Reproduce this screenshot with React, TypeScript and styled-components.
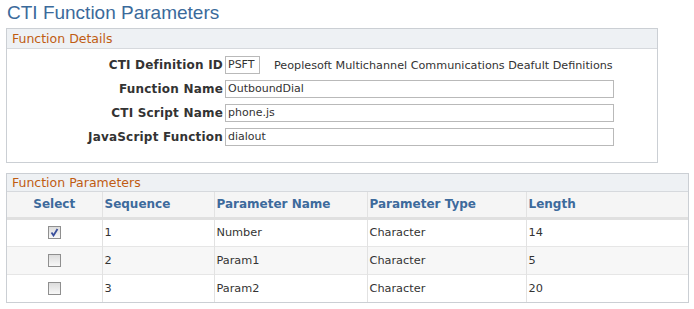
import styled, { createGlobalStyle } from 'styled-components';

const GlobalStyle = createGlobalStyle`
  body {
    margin: 0;
    background: #ffffff;
    font-family: "DejaVu Sans", Verdana, sans-serif;
    font-size: 11px;
    color: #333333;
  }
`;

const Page = styled.div`
  padding: 0 6px;
  width: 683px;
`;

const Title = styled.h1`
  margin: 0;
  padding: 2px 0 0 1px;
  height: 26px;
  font-family: "Liberation Sans", Arial, sans-serif;
  font-weight: normal;
  font-size: 19px;
  line-height: 22px;
  color: #3b6a9b;
`;

const Section = styled.div<{ $width: number }>`
  width: ${(p) => p.$width}px;
  border: 1px solid #cbcfd4;
  box-sizing: border-box;
`;

const SectionHeader = styled.div<{ $height: number }>`
  height: ${(p) => p.$height}px;
  line-height: ${(p) => p.$height}px;
  padding-left: 5px;
  background: #eef1f4;
  border-bottom: 1px solid #d6d9dd;
  color: #c05c12;
  font-size: 12.5px;
`;

const Form = styled.div`
  display: grid;
  grid-template-columns: 216px auto;
  column-gap: 2px;
  row-gap: 6px;
  padding: 7px 0 16px;
  align-items: center;
`;

const Label = styled.label`
  text-align: right;
  font-weight: bold;
  font-size: 12px;
  letter-spacing: 0.2px;
  color: #333333;
  white-space: nowrap;
`;

const Field = styled.div`
  display: flex;
  align-items: center;
  gap: 14px;
`;

const Input = styled.div<{ $width: number }>`
  width: ${(p) => p.$width}px;
  height: 18px;
  box-sizing: border-box;
  border: 1px solid #b9b9b9;
  padding-left: 2px;
  line-height: 16px;
  color: #333333;
`;

const Description = styled.span`
  color: #333333;
  font-size: 11.2px;
`;

const Gap = styled.div`
  height: 10px;
`;

const Table = styled.table`
  width: 100%;
  border-collapse: collapse;
  table-layout: fixed;
`;

const Th = styled.th<{ $w: number; $center?: boolean }>`
  box-sizing: border-box;
  width: ${(p) => p.$w}px;
  height: 26px;
  padding: 0 2px;
  text-align: ${(p) => (p.$center ? 'center' : 'left')};
  background: #f5f5f5;
  color: #3d6a9c;
  font-weight: bold;
  font-size: 12px;
  border-right: 1px solid #e2e2e2;
  border-bottom: 3px solid #e0e0e0;
  &:last-child {
    border-right: none;
  }
`;

const Tr = styled.tr<{ $alt: boolean }>`
  background: ${(p) => (p.$alt ? '#f7f7f7' : '#ffffff')};
`;

const Td = styled.td<{ $center?: boolean }>`
  box-sizing: border-box;
  height: 28px;
  padding: 0 2px;
  text-align: ${(p) => (p.$center ? 'center' : 'left')};
  border-right: 1px solid #e2e2e2;
  border-top: 1px solid #e6e6e6;
  color: #333333;
  font-size: 11.3px;
  &:last-child {
    border-right: none;
  }
`;

const Box = styled.span<{ $checked: boolean }>`
  display: inline-flex;
  align-items: center;
  justify-content: center;
  width: 13px;
  height: 13px;
  box-sizing: border-box;
  border: 1px solid #8f8f8f;
  background: linear-gradient(#dcdcdc, #f8f8f8);
  vertical-align: middle;
`;

function Checkbox({ checked }: { checked: boolean }) {
  return (
    <Box $checked={checked}>
      {checked && (
        <svg width="9" height="9" viewBox="0 0 9 9">
          <path d="M1.5 4.5 L3.5 7.5 L7.5 1" fill="none" stroke="#3a4f9c" strokeWidth="1.8" />
        </svg>
      )}
    </Box>
  );
}

const rows = [
  { seq: '1', name: 'Number', type: 'Character', len: '14', checked: true },
  { seq: '2', name: 'Param1', type: 'Character', len: '5', checked: false },
  { seq: '3', name: 'Param2', type: 'Character', len: '20', checked: false },
];

export default function App() {
  return (
    <>
      <GlobalStyle />
      <Page>
        <Title>CTI Function Parameters</Title>
        <Section $width={652}>
          <SectionHeader $height={19}>Function Details</SectionHeader>
          <Form>
            <Label>CTI Definition ID</Label>
            <Field>
              <Input $width={35}>PSFT</Input>
              <Description>Peoplesoft Multichannel Communications Deafult Definitions</Description>
            </Field>
            <Label>Function Name</Label>
            <Input $width={389}>OutboundDial</Input>
            <Label>CTI Script Name</Label>
            <Input $width={389}>phone.js</Input>
            <Label>JavaScript Function</Label>
            <Input $width={389}>dialout</Input>
          </Form>
        </Section>
        <Gap />
        <Section $width={683}>
          <SectionHeader $height={17}>Function Parameters</SectionHeader>
          <Table>
            <thead>
              <tr>
                <Th $w={95} $center>Select</Th>
                <Th $w={112}>Sequence</Th>
                <Th $w={153}>Parameter Name</Th>
                <Th $w={159}>Parameter Type</Th>
                <Th $w={162}>Length</Th>
              </tr>
            </thead>
            <tbody>
              {rows.map((r, i) => (
                <Tr key={r.seq} $alt={i % 2 === 1}>
                  <Td $center>
                    <Checkbox checked={r.checked} />
                  </Td>
                  <Td>{r.seq}</Td>
                  <Td>{r.name}</Td>
                  <Td>{r.type}</Td>
                  <Td>{r.len}</Td>
                </Tr>
              ))}
            </tbody>
          </Table>
        </Section>
      </Page>
    </>
  );
}
